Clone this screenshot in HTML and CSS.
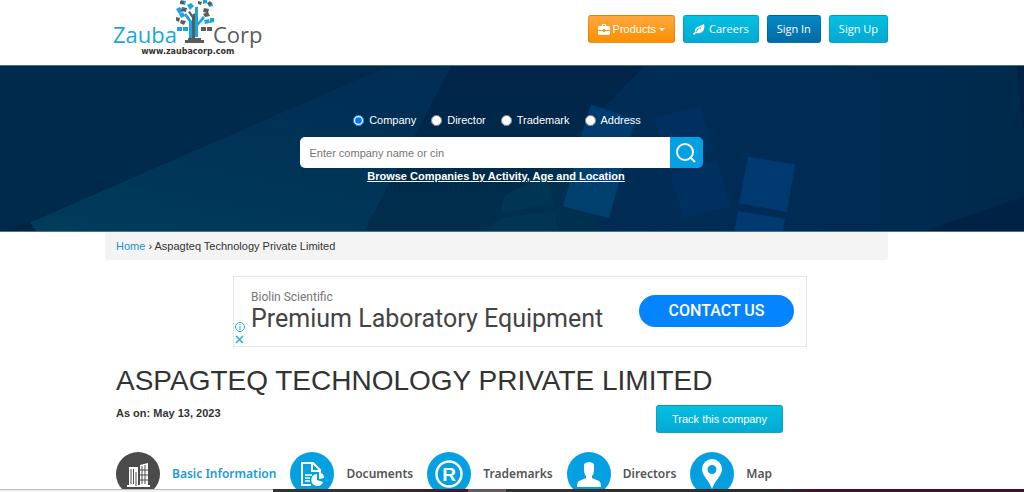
FILE: index.html
```html
<!DOCTYPE html>
<html lang="en">
<head>
    <meta charset="UTF-8">
    <meta name="viewport" content="width=device-width, initial-scale=1.0">
    <title>Aspagteq Technology Private Limited | Zauba Corp</title>
    <link rel="stylesheet" href="styles.css">
</head>
<body>

    <header class="header">
        <a class="logo" href="#">
            <span class="logo-row">
                <span class="logo-zauba">Zauba</span>
                <svg class="logo-tree" width="38" height="44" viewBox="0 0 38 44" aria-hidden="true">
                    <g fill="#1ba5e0">
                        <path d="M13 38V22l-5-7 2-2 6 8v17zM19 37V7h3v15l5-6 2 2-7 8v11z"/>
                        <path d="M5 0l5 1-1 4-5-1zM11 5l4-2 3 3-4 4zM0 9l4-2 3 4-4 3zM3 14l4-2 2 4-4 2zM1 27h5v4H1zM7 27h5v4H7zM27 0h4v3l-4 1zM32 3l4-1 1 4-4 1zM28 20l5-1 1 4-5 1zM34 18l4 0v4l-4 1z"/>
                    </g>
                    <g fill="#5b5b5d">
                        <path d="M16 38V15l3-2v25zM12 12l2-1 4 6-2 1z"/>
                        <path d="M12 38h13v2H12zM9 40h19v3H9z"/>
                        <path d="M4 1h4v3H4zM6 7l5 1-1 4-5-1zM0 17l4 1-1 4-4-2zM5 20l5 1-2 4-4-2zM22 1l4 1-1 3-3-1zM28 8l5 1-1 4-5-1zM27 14l5-2 2 4-5 1zM31 3l3-2 2 3-3 2zM25 27h5v4h-5zM31 27h5v4h-5z"/>
                    </g>
                </svg>
                <span class="logo-corp">Corp</span>
            </span>
            <span class="logo-url">www.zaubacorp.com</span>
        </a>

        <nav class="nav">
            <button class="button button-orange" type="button">
                <svg width="12" height="11" viewBox="0 0 12 11" fill="#fff" aria-hidden="true">
                    <path d="M4 2V0h4v2h3l1 1v3H7V5H5v1H0V3l1-1zM5 2h2V1H5zM0 7h5v1h2V7h5v3l-1 1H1l-1-1z"/>
                </svg>
                Products
                <span class="caret"></span>
            </button>
            <a class="button button-cyan" href="#">
                <svg width="12" height="11" viewBox="0 0 12 11" aria-hidden="true">
                    <path fill="#fff" d="M11 0c1 4 0 8-4 9-2 1-3 0-4 0l-2 2-1-1 2-2C1 3 6 3 11 0z"/>
                    <path fill="none" stroke="#10b4d8" d="M3 8c1-3 3-4 5-4"/>
                </svg>
                <span class="careers">Careers</span>
            </a>
            <a class="button button-blue" href="#">Sign In</a>
            <a class="button button-cyan" href="#">Sign Up</a>
        </nav>
    </header>

    <section class="hero">
        <svg class="hero-art" viewBox="0 0 1024 166" preserveAspectRatio="none" aria-hidden="true">
            <defs>
                <linearGradient id="teal" x1="0" y1="1" x2="0.5" y2="0">
                    <stop offset="0" stop-color="#003c5b"/>
                    <stop offset="1" stop-color="#002e54"/>
                </linearGradient>
                <linearGradient id="night" x1="0" y1="0" x2="0" y2="1">
                    <stop offset="0" stop-color="#002448"/>
                    <stop offset="1" stop-color="#002f4c"/>
                </linearGradient>
                <linearGradient id="navy" x1="0" y1="0" x2="1" y2="0">
                    <stop offset="0" stop-color="#002c56"/>
                    <stop offset="0.5" stop-color="#002b55"/>
                    <stop offset="1" stop-color="#002a4b"/>
                </linearGradient>
            </defs>
            <rect width="1024" height="166" fill="#002a4b"/>
            <path fill="#002542" d="M0 166l30-9 6 9z"/>
            <path fill="url(#teal)" d="M380 3l72-3-87 166H36l-6-9z"/>
            <path fill="none" stroke="#002745" d="M380 3L30 157M452 0l-87 166"/>
            <path fill="url(#night)" d="M452 0h193l-45 45-118 121H365z"/>
            <path fill="url(#navy)" d="M645 0h379v166H560l20-100z"/>
            <path fill="#00304f" d="M482 166l118-121-20 50 20 71z"/>
            <path fill="#003653" d="M505 130l42-22 6 30-53 10zM500 153l55-7 3 20h-70z"/>
            <path fill="#003b70" d="M591 39l45 14-12 40-46-12z"/>
            <path fill="#00406e" d="M577 90l46 13-14 50-46-12z"/>
            <path fill="#003060" d="M654 52l46-12 13 45-45 12zM670 108l47-13 13 46-46 12z"/>
            <path fill="#003a70" d="M748 91l47 8-8 48-48-9zM738 146l47 8-2 12h-49z"/>
            <path fill="#002345" d="M925 166l99-35v35zM1017 0h7v75z"/>
        </svg>

        <form class="search">
            <div class="search-types">
                <label><input type="radio" name="type" checked> Company</label>
                <label><input type="radio" name="type"> Director</label>
                <label><input type="radio" name="type"> Trademark</label>
                <label><input type="radio" name="type"> Address</label>
            </div>
            <div class="search-box">
                <input class="search-input" type="text" placeholder="Enter company name or cin" aria-label="Enter company name or cin">
                <button class="search-button" type="button" aria-label="Search">
                    <svg width="20" height="20" viewBox="0 0 20 20" fill="none" stroke="#fff" stroke-width="2" aria-hidden="true">
                        <circle cx="9" cy="9" r="8"/>
                        <path d="M14 14l5 5"/>
                    </svg>
                </button>
            </div>
            <a class="browse" href="#">Browse Companies by Activity, Age and Location</a>
        </form>
    </section>

    <main class="content">
        <div class="breadcrumb"><a href="#">Home</a> › Aspagteq Technology Private Limited</div>

        <div class="ad">
            <div class="ad-marks">
                <svg width="10" height="10" viewBox="0 0 10 10" fill="none" stroke="#20b4d4" aria-hidden="true">
                    <circle cx="5" cy="5" r="4.5"/>
                    <path d="M5 2v1M5 4v4"/>
                </svg>
                <svg width="10" height="10" viewBox="0 0 10 10" fill="none" stroke="#20b4d4" stroke-width="1.5" aria-hidden="true">
                    <path d="M1 2l7 7M8 2L1 9"/>
                </svg>
            </div>
            <div class="ad-text">
                <div class="ad-brand">Biolin Scientific</div>
                <div class="ad-title">Premium Laboratory Equipment</div>
            </div>
            <a class="ad-button" href="#">CONTACT US</a>
        </div>

        <h1 class="company">ASPAGTEQ TECHNOLOGY PRIVATE LIMITED</h1>

        <div class="meta">
            <b>As on: May 13, 2023</b>
            <button class="button button-cyan track" type="button">Track this company</button>
        </div>

        <nav class="tabs">
            <a class="tab active" href="#">
                <svg width="44" height="44" viewBox="0 0 44 44" aria-hidden="true">
                    <circle cx="22" cy="22" r="22" fill="#4b4b4b"/>
                    <path fill="#fff" d="M13 15h9v19h-9zM24 13l8-2v23h-8zM11 33h23v2H11z"/>
                    <path stroke="#4b4b4b" fill="none" d="M15 17v15M17.500 17v15M20 20v14M26 14v18M29 13v19M24 18h8M24 23h8M24 28h8"/>
                </svg>
                Basic Information
            </a>
            <a class="tab" href="#">
                <svg width="44" height="44" viewBox="0 0 44 44" aria-hidden="true">
                    <circle cx="22" cy="22" r="22" fill="#04a0e1"/>
                    <path fill="none" stroke="#fff" stroke-width="2" d="M21 33H12V11h11l7 7v3M22 11v8h7"/>
                    <path stroke="#fff" stroke-width="1.500" d="M15 23h7M15 26h5M15 29h5"/>
                    <path fill="#fff" d="M27 28v-6a6 6 0 1 0 6 8zM29 20a6 6 0 0 1 5 6l-5 1z"/>
                </svg>
                Documents
            </a>
            <a class="tab" href="#">
                <svg width="44" height="44" viewBox="0 0 44 44" aria-hidden="true">
                    <circle cx="22" cy="22" r="22" fill="#04a0e1"/>
                    <circle cx="22" cy="22" r="12.500" fill="none" stroke="#fff" stroke-width="2.500"/>
                    <text class="tab-mark" x="22" y="29" text-anchor="middle">R</text>
                </svg>
                Trademarks
            </a>
            <a class="tab" href="#">
                <svg width="44" height="44" viewBox="0 0 44 44" aria-hidden="true">
                    <circle cx="22" cy="22" r="22" fill="#04a0e1"/>
                    <path fill="#fff" d="M17 12q5-4 10 0v6q0 4-2 6v2l7 3q2 1 2 6H10q0-5 2-6l7-3v-2q-2-2-2-6z"/>
                </svg>
                Directors
            </a>
            <a class="tab" href="#">
                <svg width="44" height="44" viewBox="0 0 44 44" aria-hidden="true">
                    <circle cx="22" cy="22" r="22" fill="#04a0e1"/>
                    <path fill="#fff" fill-rule="evenodd" d="M22 7a10 10 0 0 1 10 10c0 7-7 11-10 20-3-9-10-13-10-20A10 10 0 0 1 22 7zM22 13a4.500 4.500 0 1 0 0 9 4.500 4.500 0 0 0 0-9z"/>
                </svg>
                Map
            </a>
        </nav>
    </main>

    <div class="taskbar">
        <div class="taskbar-search"></div>
        <div class="taskbar-apps"></div>
        <div class="taskbar-current"></div>
        <div class="taskbar-tray"></div>
    </div>

</body>
</html>
```

FILE: styles.css
```css
* {
    box-sizing: border-box;
}

body {
    margin: 0;
    height: 100vh;
    overflow: hidden;
    background: #fff;
    color: #333;
    font-family: "Liberation Sans", Arial, sans-serif;
    font-size: 11px;
    line-height: 16px;
}

a {
    color: #1a8fcb;
    text-decoration: none;
}

/* Header */
.header {
    display: flex;
    justify-content: space-between;
    align-items: flex-start;
    height: 65px;
    padding: 0 136px 0 113px;
}

.logo {
    display: flex;
    flex-direction: column;
    align-items: center;
    font-family: "Open Sans", sans-serif;
    font-size: 22px;
    font-weight: 500;
}

.logo-row {
    display: flex;
    align-items: flex-end;
    height: 44px;
}

.logo-zauba,
.logo-corp {
    line-height: 20px;
}

.logo-zauba {
    color: #1ba5e0;
}

.logo-corp {
    color: #5b5b5d;
}

.logo-tree {
    margin: 0 -1px;
}

.logo-url {
    font-family: "DejaVu Sans", sans-serif;
    font-size: 8px;
    font-weight: bold;
    line-height: 16px;
    color: #333;
}

.nav {
    display: flex;
    gap: 8px;
    padding-top: 15px;
}

.button {
    display: flex;
    align-items: center;
    height: 28px;
    padding: 0 9px;
    border: 1px solid rgba(0, 0, 0, 0.1);
    border-radius: 3px;
    color: #fff;
    font-family: "Open Sans", sans-serif;
    font-size: 11px;
    cursor: pointer;
}

.button-orange {
    gap: 3px;
    background: linear-gradient(#ffa73d, #fb8f00);
    font-family: "Liberation Sans", Arial, sans-serif;
}

.button-cyan {
    background: linear-gradient(#05c0e0, #04a9d4);
}

.button-blue {
    background: linear-gradient(#0488c8, #046ba5);
}

.careers {
    margin-left: 4px;
}

.caret {
    border: 3px solid transparent;
    border-top-color: #fff;
    border-bottom: 0;
}

/* Search banner */
.hero {
    position: relative;
    border-top: 1px solid #4d7086;
    border-bottom: 1px solid #4d7086;
    background: #002a4b;
}

.hero-art {
    position: absolute;
    top: 0;
    left: 0;
    width: 100%;
    height: 100%;
}

.search {
    position: relative;
    display: flex;
    flex-direction: column;
    align-items: center;
    width: 425px;
    margin: 0 auto;
    padding: 46px 22px 47px 0;
}

.search-types {
    display: flex;
    gap: 15px;
    margin-right: 8px;
    color: #fff;
}

.search-types label {
    display: flex;
    align-items: center;
    gap: 5px;
}

.search-types input {
    width: 11px;
    height: 11px;
    margin: 0;
}

.search-box {
    display: flex;
    width: 100%;
    height: 31px;
    margin-top: 9px;
    border-radius: 5px;
    overflow: hidden;
}

.search-input {
    flex: 1;
    padding: 0 10px;
    border: 0;
    background: #fff;
    font-family: inherit;
    font-size: 11px;
}

.search-input::placeholder {
    color: #757575;
}

.search-button {
    display: flex;
    align-items: center;
    width: 33px;
    padding: 0 6px;
    border: 0;
    background: #04a0e1;
}

.browse {
    margin-right: 10px;
    color: #fff;
    font-weight: bold;
    text-decoration: underline;
}

/* Company page */
.content {
    margin: 0 136px 0 105px;
}

.breadcrumb {
    padding: 6px 11px;
    border-radius: 0 0 3px 3px;
    background: #f4f4f4;
}

.ad {
    display: flex;
    align-items: center;
    height: 71px;
    margin: 16px 81px 0 128px;
    padding: 0 12px 2px 0;
    border: 1px solid #e6e6e6;
}

.ad-marks {
    display: flex;
    flex-direction: column;
    align-self: flex-end;
    gap: 2px;
    padding: 0 6px 0 1px;
}

.ad-text {
    flex: 1;
    font-family: Roboto, sans-serif;
}

.ad-brand {
    color: #757575;
    font-size: 12px;
    line-height: 16px;
}

.ad-title {
    color: #444;
    font-size: 25px;
    line-height: 28px;
}

.ad-button {
    width: 155px;
    border-radius: 16px;
    background: #0485ff;
    color: #fff;
    font-family: Roboto, sans-serif;
    font-size: 16px;
    font-weight: 500;
    line-height: 32px;
    text-align: center;
}

.company {
    margin: 16px 11px 0;
    font-size: 28px;
    font-weight: normal;
    line-height: 36px;
}

.meta {
    display: flex;
    justify-content: space-between;
    margin: 6px 105px 0 11px;
}

.track {
    padding: 0 15px;
    font-family: "Liberation Sans", Arial, sans-serif;
}

.tabs {
    display: flex;
    gap: 14px;
    margin: 19px 11px 0;
}

.tab {
    display: flex;
    align-items: center;
    gap: 12px;
    color: #555;
    font-family: "Noto Sans", sans-serif;
    font-size: 12px;
    font-weight: 600;
    white-space: nowrap;
}

.tab.active {
    color: #1a9ad9;
}

.tab-mark {
    fill: #fff;
    font-family: "Liberation Sans", Arial, sans-serif;
    font-size: 19px;
    font-weight: bold;
}

/* Taskbar edge along the bottom */
.taskbar {
    position: fixed;
    right: 0;
    bottom: 0;
    left: 0;
    display: flex;
    height: 3px;
    background: #333;
}

.taskbar-search {
    width: 273px;
    border-top: 1px solid #bbb;
    background: #f3f3f3;
}

.taskbar-apps {
    width: 195px;
    background: linear-gradient(90deg, #333, #333 50%, #3d1827);
}

.taskbar-current {
    width: 38px;
    background: #635a60;
}

.taskbar-tray {
    flex: 1;
    background: linear-gradient(90deg, #333, #2c2c2c 50%, #40122a 60%, #40122a);
}
```
